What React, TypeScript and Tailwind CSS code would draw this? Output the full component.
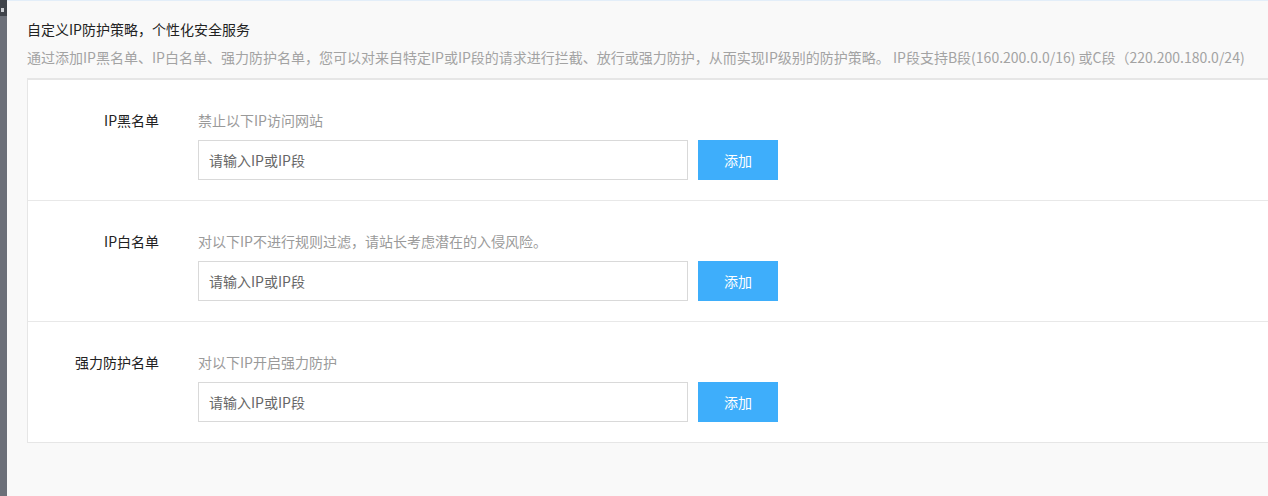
const FONT = "font-['Microsoft_YaHei','Noto_Sans_CJK_SC',sans-serif]";

interface IpRowProps {
  label: string;
  tip: string;
  last?: boolean;
}

function IpRow({ label, tip, last }: IpRowProps) {
  return (
    <div
      className={`flex pt-[30px] pb-[20px] ${last ? "" : "border-b border-[#e8e8e8]"}`}
    >
      <div className="w-[131px] shrink-0 text-right text-[14px] leading-[20px] text-[#222]">
        {label}
      </div>
      <div className="ml-[39px] flex-1">
        <div className="text-[14px] leading-[20px] text-[#9a9a9a]">{tip}</div>
        <div className="mt-[10px] flex items-center">
          <input
            className="h-[40px] w-[490px] border border-[#d9d9d9] bg-white px-[10px] text-[14px] text-[#333] outline-none placeholder:text-[#666]"
            placeholder="请输入IP或IP段"
          />
          <button className="ml-[10px] h-[40px] w-[80px] bg-[#3eaefb] text-[14px] text-white">
            添加
          </button>
        </div>
      </div>
    </div>
  );
}

export default function App() {
  return (
    <div className={`flex h-[496px] w-full overflow-hidden ${FONT}`}>
      <div className="flex w-[7px] shrink-0 flex-col bg-[#6c7079]">
        <div className="flex h-[16px] items-start bg-[#3f434a] pt-[8px]">
          <div className="ml-[1px] h-[4px] w-[3px] bg-[#c9ccd1]" />
        </div>
      </div>
      <div className="flex-1 border-t border-[#e3eef9] bg-[#f9f9f9] pl-[20px]">
        <div className="pt-[18px] text-[14px] leading-[20px] text-[#222]">
          自定义IP防护策略，个性化安全服务
        </div>
        <div className="mt-[8px] whitespace-nowrap text-[14px] leading-[20px] text-[#a3a3a3]">
          通过添加IP黑名单、IP白名单、强力防护名单，您可以对来自特定IP或IP段的请求进行拦截、放行或强力防护，从而实现IP级别的防护策略。 IP段支持B段(160.200.0.0/16) 或C段（220.200.180.0/24)
        </div>
        <div className="mt-[11px] border-t-2 border-l border-b border-[#e6e6e6] bg-white">
          <IpRow label="IP黑名单" tip="禁止以下IP访问网站" />
          <IpRow label="IP白名单" tip="对以下IP不进行规则过滤，请站长考虑潜在的入侵风险。" />
          <IpRow label="强力防护名单" tip="对以下IP开启强力防护" last />
        </div>
      </div>
    </div>
  );
}
